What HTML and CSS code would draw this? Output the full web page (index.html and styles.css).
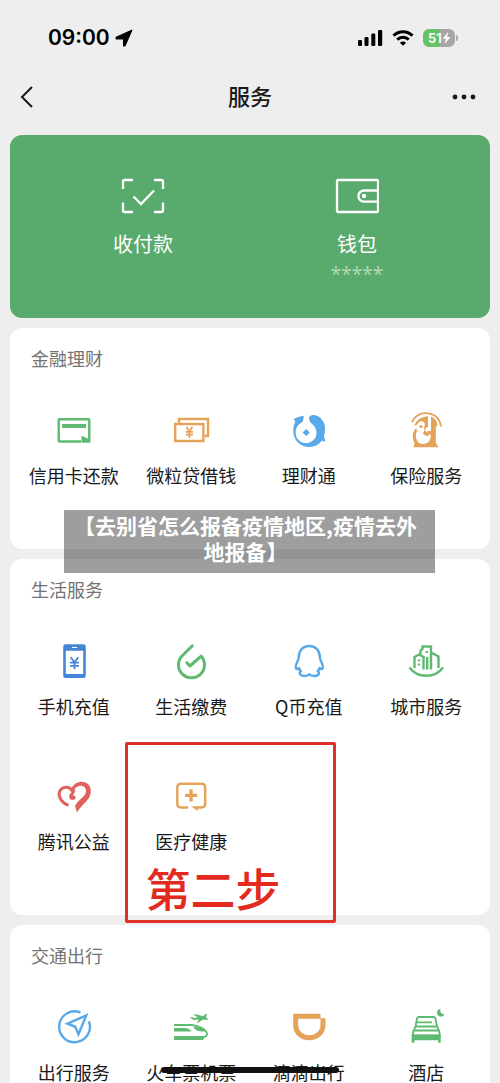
FILE: index.html
```html
<!DOCTYPE html>
<html lang="zh-CN">
<head>
<meta charset="utf-8">
<meta name="viewport" content="width=device-width, initial-scale=1">
<title>服务</title>
<link rel="stylesheet" href="styles.css">
</head>
<body>
<div class="status">
  <div class="clock"><span>09:00</span>
    <svg width="18" height="18" viewBox="0 0 18 18"><path stroke="#000" stroke-width="1.200" stroke-linejoin="round" d="M1.200 8.300 16.800 1.200 10 16.800H8.600V9.800H1.200Z"/></svg>
  </div>
  <div class="signals">
    <svg width="26" height="18" viewBox="0 0 26 18"><rect x="1" y="11" width="4" height="6" rx="1.200"/><rect x="7.500" y="8" width="4" height="9" rx="1.200"/><rect x="14.300" y="4.500" width="4" height="12.500" rx="1.200"/><rect x="21" y="1" width="4.200" height="16" rx="1.200"/></svg>
    <svg width="22" height="18" viewBox="0 0 22 18"><g fill="none" stroke="#000" stroke-width="3"><path d="M1.500 6.600C7 1.300 15 1.300 20.500 6.600"/><path d="M5.200 10.700c3.300-3.200 8.300-3.200 11.600 0"/></g><path d="M11 16.800 7.900 13.700c1.700-1.500 4.500-1.500 6.200 0Z"/></svg>
    <div class="battery"><span class="level">51</span><svg width="9" height="12" viewBox="0 0 9 12"><path fill="#fff" d="M6 0 .5 6.700h3.300L2.700 12l5.800-7H5.200Z"/></svg></div>
  </div>
</div>
<header class="nav">
  <button class="icon-button" aria-label="返回"><svg width="14" height="24" viewBox="0 0 14 24"><path d="M12 2 2 12l10 10" fill="none" stroke="#191919" stroke-width="2"/></svg></button>
  <h1>服务</h1>
  <button class="icon-button" aria-label="更多"><svg width="24" height="24" viewBox="0 0 24 24"><g fill="#191919"><circle cx="3" cy="12" r="2.400"/><circle cx="12" cy="12" r="2.400"/><circle cx="21" cy="12" r="2.400"/></g></svg></button>
</header>
<main>
  <section class="card pay">
    <a href="#pay"><svg width="44" height="36" viewBox="0 0 44 36"><g fill="none" stroke="#fff" stroke-width="2.300"><path d="M2 11V3.500Q2 2 3.500 2H12M33 2h7.500Q42 2 42 3.500V11M42 24.500V32.500q0 1.500-1.500 1.500H33M12 34H3.500Q2 34 2 32.500V24.500"/><path d="m12.500 18.500 7.500 7.500L33 12.500"/></g></svg><span>收付款</span></a>
    <a href="#wallet"><svg width="44" height="36" viewBox="0 0 44 36"><g fill="none" stroke="#fff" stroke-width="2.300"><rect x="2" y="2" width="41" height="32" rx="1.200"/><path d="M43 12.500H29a5.600 5.600 0 0 0 0 11.200h14"/></g><circle cx="29" cy="18" r="2.200" fill="#fff"/></svg><span>钱包</span><small>*****</small></a>
  </section>

  <section class="card">
    <h2>金融理财</h2>
    <div class="grid">
      <a class="item" href="#card"><svg class="green" viewBox="0 0 40 40"><path class="line" d="M27 31.500H5.500q-.8 0-.8-.8V10q0-.8.8-.8h29q.8 0 .8.800v20"/><path d="M8 14h24v4H8ZM27.500 25.800l8.900 4v2.900h-8.900Z"/></svg><span>信用卡还款</span></a>
      <a class="item" href="#loan"><svg class="orange" viewBox="0 0 40 40"><path class="line" d="M8 13V9h29v17h-3.500"/><path class="line" d="M4.200 14h28.200v17H4.200Z"/><path class="line thin" d="m15.300 17 3.100 4.200 3.100-4.200M18.400 21v7M14.800 21.800H22M14.800 24.700H22"/></svg><span>微粒贷借钱</span></a>
      <a class="item" href="#invest"><svg class="blue" viewBox="0 0 40 40"><path d="M14.500 5.700C11.600 6.200 7 7 4.500 9.600l2 1.700C4.900 15 4 17.500 4.300 22 5 31 12 37.200 20.500 37c5.400-.1 9.500-2.500 12.300-6.200 1.200 0 2.500.5 3.300 1.500.1-2-.2-3.800-1.300-5.500C37 19.500 36.500 13.500 32 8.500 29 5 24 4 21 6c-1.500 1-1 3.500.3 6.300 2.200 2 6 4.900 6.200 10.200.2 6.100-4.500 10.600-10.500 10.600S6.600 28.500 6.600 22.500c0-5 3-8.300 6.200-10 1.900-1.700 2-4.800 1.700-6.800Z"/><path d="M17.200 20 19.700 22.500 17.200 25 14.700 22.500Z" stroke="currentColor" stroke-width="1.500"/></svg><span>理财通</span></a>
      <a class="item" href="#insurance"><svg class="orange" viewBox="0 0 40 40"><path class="line thin" d="M6 12.300C9 5.500 15 2.500 22 3.300c7.300.9 12 5.700 12.900 13.200"/><path d="M8 15.800C11 9.500 16 6.500 22 6.300v10.500c-1.800.5-3 2.400-2.600 4.200l3 2.300v2.800c-2.400 0-4.400-1-5.600-2.600 1.800-2 2-4 1.200-6.200 1.500-2 1-5.300-2-6-2.700-.4-4.200 2-5 3.500ZM25 6.500c4 1.500 6 4.500 6.400 8.500l-1.600 2.500V33l2.700 4.300H7.200l1.500-3.600C6 28.500 6 23 9.400 18.800l2 1.200c-2.200 4.200-2.200 9.500 1.600 13 6.500 3 12.500-1 11.600-8.500h-3V21H25Z"/><circle cx="15" cy="16.500" r="1.600"/></svg><span>保险服务</span></a>
    </div>
  </section>

  <section class="card">
    <h2>生活服务</h2>
    <div class="grid">
      <a class="item" href="#phone"><svg class="navy" viewBox="0 0 40 40"><path fill-rule="evenodd" d="M11.700 3.300h17.600q2.500 0 2.500 2.500v28.700q0 2.500-2.500 2.500H11.700q-2.500 0-2.500-2.500V5.800q0-2.500 2.500-2.500Zm.1 6.400V33h17.400V9.700ZM18 5.900v1.200h5V5.900Z"/><path class="line thin" d="m16.700 16.300 3.800 5 3.800-5M20.500 21v7.200M16 21.700h9M16 24.800h9"/></svg><span>手机充值</span></a>
      <a class="item" href="#bills"><svg class="green" viewBox="0 0 40 40"><path class="line bold" stroke-linecap="round" stroke-linejoin="round" d="M21.300 4.800 10.500 15.500a13 13 0 1 0 19.700-.3L18.900 25l-3-3.300"/></svg><span>生活缴费</span></a>
      <a class="item" href="#qcoin"><svg class="blue" viewBox="0 0 40 40"><path class="line" stroke-linejoin="round" d="M20.300 5c-6.800 0-10.500 5-10.600 11.500 0 1.500-.8 3-1.500 4.500C6.800 24 6.400 27 7.500 28c1 .6 1.700-.5 2.500-1 .5 1.500 1 2.500 2 3.300-1.500.8-2 2.300-.7 3.400 2.300 1.900 7.200 1.500 9-.5 1.800 2 6.700 2.400 9 .5 1.300-1.100.8-2.600-.7-3.400 1-.8 1.500-1.800 2-3.300.8.500 1.500 1.600 2.500 1 1.100-1 .7-4-.7-7-.7-1.500-1.500-3-1.500-4.500C30.800 10 27 5 20.300 5Z"/></svg><span>Q币充值</span></a>
      <a class="item" href="#city"><svg class="green" viewBox="0 0 40 40"><path class="line" d="M3.500 26.500c8 11 25.500 11 33.500 0M8.500 27V16l4.500-2.500 4.500 2.500V28.500M14.500 14V9.500l2-1.500V5.500h8.500V28.500M25 11.500l7.500 4V27M21.200 16v12.500"/><path d="M11.800 18.500h2.400v2h-2.400Zm0 4h2.400v2h-2.400Zm7.700-12.500h2.400v2h-2.400Z"/></svg><span>城市服务</span></a>
      <a class="item" href="#charity"><svg class="red" viewBox="0 0 40 40"><path d="M17.500 12.300C20 7.500 24.500 5.500 29 5.900c7 .8 9.300 7.500 7 13.500C34 25.500 27.500 28.500 23 36.500l-2-6.500C23.500 24 31.500 21 32 15.500c.3-4.300-3.800-6.500-7.500-5.300-2.500.9-3.700 2.300-4.700 4.300Z"/><path class="line bold" d="M18.600 15.500C16.500 10.500 10 9.700 6.600 13.700 2.800 19 7 26.500 14.500 29.300M19.500 13.500c1 4.500-3 3.800-3 7.500"/><ellipse cx="18.500" cy="21.500" rx="3" ry="2.300"/></svg><span>腾讯公益</span></a>
      <div class="marked">
        <a class="item" href="#health"><svg class="orange" viewBox="0 0 40 40"><path class="line" d="M17 31.500H10q-3.700 0-3.700-3.700V11.500Q6.300 7.800 10 7.800h20.500q3.700 0 3.700 3.700v16.300q0 3.700-3.700 3.700H26"/><path d="M18.400 13.300h3.300v4.400h4.400V21h-4.400v4.400h-3.300V21H14v-3.300h4.400ZM20 30.200h6.800v4.800Z"/></svg><span>医疗健康</span></a>
        <div class="step">第二步</div>
      </div>
    </div>
  </section>

  <section class="card last">
    <h2>交通出行</h2>
    <div class="grid">
      <a class="item" href="#travel"><svg class="blue" viewBox="0 0 40 40"><path class="line" d="M26.500 5.600A15.400 15.400 0 1 0 34.900 14.200"/><path class="line" d="M32.300 8.300 13.500 16.700l7.700 3.100 3.300 7.500Z"/></svg><span>出行服务</span></a>
      <a class="item" href="#tickets"><svg class="green" viewBox="0 0 40 40"><path class="line thin" d="M3 18h17.500c7 .3 15.500 4.500 15.500 9 0 2-2 3-4.500 3H3"/><path d="M3 21h10c4 0 6 1.500 7.500 3.500H3ZM3 29h31l-2 4H3ZM22.500 20c5-1 9 1.500 12 4.500-6 .5-10-.5-12-4.500ZM19 10.500l2-.5 2 1 4-.6-4.500-2.600 2.500-.5 7 2 2.700-2.200 1.500-.2-1.300 3.700L37 12l-.7 1-4.300-.5-4.500 3-1.700.2 2.200-3.100-5.500.4Z"/></svg><span>火车票机票</span></a>
      <a class="item" href="#ride"><svg class="orange" viewBox="0 0 40 40"><path fill-rule="evenodd" d="M5.200 6.700h26.300v4.600h5v7c0 8.500-7 15-16.200 15S4.200 27 4.200 18.300V7.700q0-1 1-1Zm4 5V18c0 6 5 10.300 11.100 10.300S31.500 24 31.500 18v-6.300Z"/></svg><span>滴滴出行</span></a>
      <a class="item" href="#hotel"><svg class="green" viewBox="0 0 40 40"><path class="line thin" d="M9.500 19.500 11 11.500q.4-1.500 2-1.500h14.500q1.600 0 2 1.500l1.500 8M10.500 15.300H26M9.500 19.500h21.700q2.600 4.500 2.600 9H6.700q0-4.500 2.800-9ZM8 23.500h24.500"/><path d="M5.700 27.700h29v8h-2.600v-2.400H8.500v2.400H5.700ZM34.500 1.700c-1 3.200.7 5.700 4 5.600-1.200 2.600-4.700 3.200-6.600 1C29.900 5.900 31.200 2.500 34.500 1.700Z"/></svg><span>酒店</span></a>
    </div>
  </section>
  <p class="caption">【去别省怎么报备疫情地区,疫情去外地报备】</p>
</main>
<div class="home-bar"></div>
</body>
</html>
```
FILE: styles.css
```css
* { box-sizing: border-box; }

body {
  margin: 0;
  min-height: 100vh;
  background: #eee;
  color: #191919;
  font-family: "Noto Sans CJK SC", sans-serif;
}

a { color: inherit; text-decoration: none; }
h1, h2, p { margin: 0; font-weight: 400; }
svg { display: block; fill: currentColor; }

.status {
  display: flex;
  justify-content: space-between;
  align-items: center;
  height: 75px;
  padding: 0 45px 0 48px;
  color: #000;
}
.clock, .signals { display: flex; align-items: center; }
.clock { gap: 5px; font: 600 21px/24px Inter, sans-serif; }
.signals { gap: 9px; }
.battery {
  position: relative;
  display: flex;
  align-items: center;
  width: 32px;
  height: 18px;
  padding-left: 5px;
  border-radius: 6px;
  background: linear-gradient(to right, #62c466 53%, #a6a6a6 53%);
  color: #fff;
  font: 600 13px/18px Inter, sans-serif;
}
.battery::after {
  content: "";
  position: absolute;
  right: -3px;
  top: 6px;
  width: 2px;
  height: 6px;
  border-radius: 0 2px 2px 0;
  background: #aaa;
}

.nav {
  display: flex;
  justify-content: space-between;
  align-items: center;
  height: 44px;
  padding: 0 24px 0 20px;
}
.nav h1 { padding-bottom: 4px; font-size: 22px; line-height: 32px; font-weight: 500; }
.icon-button { display: flex; padding: 0; border: 0; background: none; }
.icon-button:first-child { width: 28px; }

main {
  position: relative;
  display: flex;
  flex-direction: column;
  gap: 10px;
  padding: 16px 10px 0;
}
.card { padding: 18px 5px 63px; border-radius: 12px; background: #fff; }
.card.last { padding-bottom: 0; border-radius: 12px 12px 0 0; }
.card h2 { padding-left: 16px; color: #737373; font-size: 18px; line-height: 24px; }

.card.pay {
  display: grid;
  grid-template-columns: 1fr 1fr;
  padding: 43px 26px 34px;
  background: #58ab6c;
  color: #fff;
}
.pay a { display: flex; flex-direction: column; align-items: center; }
.pay span { margin-top: 15px; font-size: 20px; line-height: 30px; }
.pay small {
  height: 25px;
  color: #b0d8b9;
  font: 19px/30px "Noto Sans", sans-serif;
}

.grid {
  display: grid;
  grid-template-columns: repeat(4, 1fr);
  row-gap: 59px;
  margin-top: 40px;
}
.item {
  display: flex;
  flex-direction: column;
  align-items: center;
  gap: 14px;
  font-size: 18px;
  line-height: 22px;
  white-space: nowrap;
}
.item svg { width: 40px; height: 40px; }
.line { fill: none; stroke: currentColor; stroke-width: 2.4; }
.line.thin { stroke-width: 1.8; }
.line.bold { stroke-width: 3; }
.green { color: #5dba70; }
.orange { color: #e5a35a; }
.blue { color: #58a9ea; }
.navy { color: #4585d8; }
.red { color: #df625e; }

.marked { position: relative; }
.step {
  position: absolute;
  left: -8px;
  top: -34px;
  display: flex;
  align-items: flex-end;
  width: 211px;
  height: 181px;
  padding: 0 0 2px 18px;
  border: 3px solid #de3028;
  border-radius: 2px;
  color: #e32a1e;
  font-size: 45px;
  font-weight: 500;
  line-height: 60px;
  pointer-events: none;
}

.caption {
  position: absolute;
  left: 64px;
  right: 65px;
  top: 391px;
  padding: 2px 8px 9px 0;
  background: rgba(0, 0, 0, 0.38);
  color: #fff;
  font-size: 21px;
  font-weight: 700;
  line-height: 26px;
  text-align: center;
}

.home-bar {
  position: fixed;
  left: 50%;
  bottom: 10px;
  width: 178px;
  height: 6px;
  border-radius: 3px;
  background: #111;
  transform: translateX(-50%);
}
```
